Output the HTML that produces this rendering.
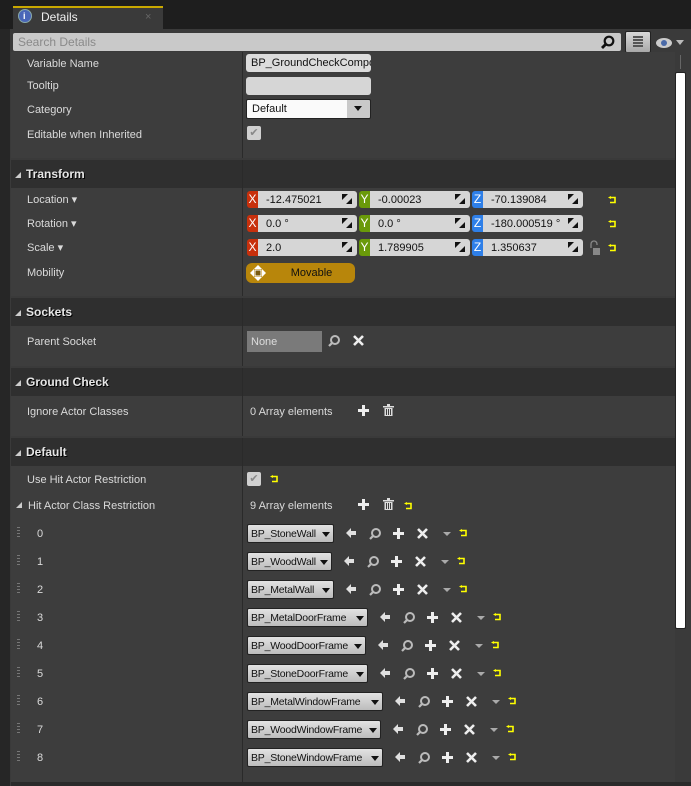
<!DOCTYPE html>
<html><head><meta charset="utf-8"><style>
*{margin:0;padding:0;box-sizing:border-box}
body{width:691px;height:786px;overflow:hidden;background:#222;font-family:"Liberation Sans",sans-serif;font-size:11px;color:#dadada;position:relative}
.a{position:absolute}
.t{position:absolute;white-space:nowrap;line-height:14px;margin-top:1px}
.hdr{position:absolute;left:11px;width:664px;height:28px;background:#2f2f2f}
.hdr span{position:absolute;left:15px;top:7px;font-weight:bold;font-size:12px;color:#e6e6e6;text-shadow:1px 1px 0 #000}
.hdr i{position:absolute;left:4px;top:12px;width:0;height:0;border-left:6px solid transparent;border-bottom:6px solid #ccc}
.rows{position:absolute;left:11px;width:664px;background:#3d3d3d}
.div{position:absolute;left:242px;width:1px;background:#2a2a2a}
.fld{position:absolute;height:17px;background:#d6d6d6;border-radius:0 3px 3px 0;color:#111;font-size:11px;line-height:18px;padding-left:8px}
.ax{position:absolute;width:11px;height:17px;color:#fff;font-size:12px;line-height:17px;text-align:center;border-radius:3px 0 0 3px}
.dd{position:absolute;height:19px;background:linear-gradient(#e2e2e2,#bcbcbc);border:1px solid #222;border-radius:2px;color:#111;font-size:10.5px;letter-spacing:-0.2px;line-height:18px;padding-left:3px;white-space:nowrap;overflow:hidden}
.dd:after{content:"";position:absolute;right:3px;top:7px;border-left:4px solid transparent;border-right:4px solid transparent;border-top:5px solid #111}
.grip{position:absolute;left:17px;width:3px;height:12px;background:repeating-linear-gradient(#777 0 1px,transparent 1px 3px)}
</style></head><body>
<svg width="0" height="0" style="position:absolute"><defs>
<g id="rs"><path d="M2 1.5h5v5H2" stroke="#ff0" stroke-width="1.6" fill="none"/><path d="M0 1.5l3-1.5v3z" fill="#ff0"/></g>
<g id="ar"><path d="M0 5l5-5v3h5v4H5v3z" fill="#e0e0e0"/></g>
<g id="mg"><circle cx="7" cy="5" r="4" stroke="#bbb" stroke-width="2" fill="none"/><path d="M4 8l-3 3" stroke="#bbb" stroke-width="2.2"/></g>
<g id="pl"><path d="M4 0h3v4h4v3H7v4H4V7H0V4h4z" fill="#eee"/></g>
<g id="xx"><path d="M1 1l9 9M10 1l-9 9" stroke="#eee" stroke-width="2.6"/></g>
<g id="tr"><path d="M0 0h8l-4 4z" fill="#aaa"/></g>
<g id="bin"><path d="M0 2h11v1.5H0zM4 0h3v2H4zM1.5 4h8v8h-8z" fill="#ddd"/><path d="M3.5 5v6M5.5 5v6M7.5 5v6" stroke="#3d3d3d"/></g>
</defs></svg>

<div class="a" style="left:0;top:0;width:691px;height:29px;background:#1e1e1e"></div>
<div class="a" style="left:13px;top:6px;width:150px;height:23px;background:#3a3a3a;border-top:2px solid #c9a800"></div>
<div class="a" style="left:18px;top:9px;width:14px;height:14px;border-radius:50%;background:#4a66b8;border:1px solid #8aa"></div>
<div class="t" style="left:23px;top:8px;color:#fff;font-size:9px;font-weight:bold">i</div>
<div class="t" style="left:41px;top:9px;color:#eee;font-size:12px">Details</div>
<div class="t" style="left:145px;top:9px;color:#666;font-size:11px">×</div>
<div class="a" style="left:0;top:29px;width:691px;height:757px;background:#3a3a3a"></div>
<div class="a" style="left:0;top:29px;width:10px;height:757px;background:#262626"></div>
<div class="a" style="left:13px;top:33px;width:608px;height:18px;background:#c9c9c9;border-radius:2px"></div>
<div class="t" style="left:18px;top:34px;color:#8a8a8a;font-size:12px">Search Details</div>
<svg class="a" style="left:600px;top:35px" width="16" height="16"><circle cx="9" cy="6" r="4.3" stroke="#111" stroke-width="2.2" fill="none"/><path d="M6 9l-4 4" stroke="#111" stroke-width="2.8"/></svg>
<div class="a" style="left:625px;top:31px;width:26px;height:22px;background:linear-gradient(#d8d8d8,#a8a8a8);border:1px solid #222;border-radius:2px"></div>
<div class="a" style="left:633px;top:36px;width:10px;height:12px;background:repeating-linear-gradient(#555 0 2px,transparent 2px 3px)"></div>
<div class="a" style="left:656px;top:38px;width:16px;height:10px;border-radius:50%;background:#ccc"></div>
<div class="a" style="left:661px;top:40px;width:6px;height:6px;border-radius:50%;background:#4a6aa8"></div>
<div class="a" style="left:676px;top:40px;border-left:4px solid transparent;border-right:4px solid transparent;border-top:5px solid #bbb"></div>
<div class="a" style="left:680px;top:55px;width:1px;height:14px;background:#666"></div>
<div class="a" style="left:675px;top:72px;width:11px;height:557px;background:#fff;border:1px solid #222;border-radius:2px"></div>

<div class="rows" style="top:52px;height:106px"></div>
<div class="div" style="top:52px;height:106px"></div>
<div class="t" style="left:27px;top:56px">Variable Name</div>
<div class="t" style="left:27px;top:78px">Tooltip</div>
<div class="t" style="left:27px;top:102px">Category</div>
<div class="t" style="left:27px;top:127px">Editable when Inherited</div>
<div class="a" style="left:246px;top:54px;width:125px;height:18px;background:#dcdcdc;border-radius:3px;color:#111;line-height:19px;padding-left:5px;overflow:hidden;white-space:nowrap">BP_GroundCheckComponent</div>
<div class="a" style="left:246px;top:77px;width:125px;height:18px;background:#d6d6d6;border-radius:3px"></div>
<div class="a" style="left:246px;top:99px;width:125px;height:20px;background:linear-gradient(90deg,#fafafa 0 100px,#c9c9c9 100px);border:1px solid #222;border-radius:2px;color:#111;line-height:19px;padding-left:5px">Default</div>
<div class="a" style="left:354px;top:106px;border-left:4px solid transparent;border-right:4px solid transparent;border-top:5px solid #111"></div>
<div class="a" style="left:247px;top:126px;width:14px;height:14px;background:#d0d0d0;border-radius:2px;color:#888;font-size:11px;line-height:14px;text-align:center">✔</div>

<div class="hdr" style="top:160px"><i></i><span>Transform</span></div>
<div class="rows" style="top:188px;height:108px"></div>
<div class="div" style="top:160px;height:136px"></div>
<div class="t" style="left:27px;top:192px">Location ▾</div>
<div class="t" style="left:27px;top:216px">Rotation ▾</div>
<div class="t" style="left:27px;top:240px">Scale ▾</div>
<div class="t" style="left:27px;top:265px">Mobility</div>

<div class="ax" style="left:247px;top:191px;background:#c8300c">X</div><div class="fld" style="left:258px;top:191px;width:99px">-12.475021</div>
<div class="ax" style="left:359px;top:191px;background:#6a9a0a">Y</div><div class="fld" style="left:370px;top:191px;width:100px">-0.00023</div>
<div class="ax" style="left:472px;top:191px;background:#2e7fe8">Z</div><div class="fld" style="left:483px;top:191px;width:100px">-70.139084</div>
<div class="ax" style="left:247px;top:215px;background:#c8300c">X</div><div class="fld" style="left:258px;top:215px;width:99px">0.0 °</div>
<div class="ax" style="left:359px;top:215px;background:#6a9a0a">Y</div><div class="fld" style="left:370px;top:215px;width:100px">0.0 °</div>
<div class="ax" style="left:472px;top:215px;background:#2e7fe8">Z</div><div class="fld" style="left:483px;top:215px;width:100px">-180.000519 °</div>
<div class="ax" style="left:247px;top:239px;background:#c8300c">X</div><div class="fld" style="left:258px;top:239px;width:99px">2.0</div>
<div class="ax" style="left:359px;top:239px;background:#6a9a0a">Y</div><div class="fld" style="left:370px;top:239px;width:100px">1.789905</div>
<div class="ax" style="left:472px;top:239px;background:#2e7fe8">Z</div><div class="fld" style="left:483px;top:239px;width:100px">1.350637</div>
<svg class="a" style="left:342px;top:194px" width="10" height="10"><path d="M0 0h6L0 6zM10 10H4l6-6z" fill="#111"/></svg>
<svg class="a" style="left:455px;top:194px" width="10" height="10"><path d="M0 0h6L0 6zM10 10H4l6-6z" fill="#111"/></svg>
<svg class="a" style="left:568px;top:194px" width="10" height="10"><path d="M0 0h6L0 6zM10 10H4l6-6z" fill="#111"/></svg>
<svg class="a" style="left:342px;top:218px" width="10" height="10"><path d="M0 0h6L0 6zM10 10H4l6-6z" fill="#111"/></svg>
<svg class="a" style="left:455px;top:218px" width="10" height="10"><path d="M0 0h6L0 6zM10 10H4l6-6z" fill="#111"/></svg>
<svg class="a" style="left:568px;top:218px" width="10" height="10"><path d="M0 0h6L0 6zM10 10H4l6-6z" fill="#111"/></svg>
<svg class="a" style="left:342px;top:242px" width="10" height="10"><path d="M0 0h6L0 6zM10 10H4l6-6z" fill="#111"/></svg>
<svg class="a" style="left:455px;top:242px" width="10" height="10"><path d="M0 0h6L0 6zM10 10H4l6-6z" fill="#111"/></svg>
<svg class="a" style="left:568px;top:242px" width="10" height="10"><path d="M0 0h6L0 6zM10 10H4l6-6z" fill="#111"/></svg>
<svg class="a" style="left:608px;top:196px" width="8" height="8"><use href="#rs"/></svg>
<svg class="a" style="left:608px;top:220px" width="8" height="8"><use href="#rs"/></svg>
<svg class="a" style="left:608px;top:244px" width="8" height="8"><use href="#rs"/></svg>
<svg class="a" style="left:589px;top:240px" width="12" height="16"><path d="M2 8V4a3 3 0 0 1 6 0v1" stroke="#888" stroke-width="1.3" fill="none"/><rect x="4" y="8" width="7" height="7" fill="#888"/></svg>
<div class="a" style="left:246px;top:263px;width:109px;height:20px;background:#b8860b;border-radius:6px;color:#111;text-align:center;line-height:21px;padding-left:22px">Movable</div>
<svg class="a" style="left:250px;top:265px" width="16" height="16"><path d="M8 0l4 4H4zM8 16l4-4H4zM0 8l4-4v8zM16 8l-4-4v8z" fill="#fff"/><rect x="5" y="5" width="6" height="6" fill="#7a5a10" stroke="#fff"/></svg>

<div class="hdr" style="top:298px"><i></i><span>Sockets</span></div>
<div class="rows" style="top:326px;height:40px"></div>
<div class="div" style="top:298px;height:68px"></div>
<div class="t" style="left:27px;top:334px">Parent Socket</div>
<div class="a" style="left:247px;top:331px;width:75px;height:21px;background:#7a7a7a;color:#ddd;line-height:22px;padding-left:4px">None</div>
<svg class="a" style="left:328px;top:335px" width="14" height="14"><use href="#mg"/></svg>
<svg class="a" style="left:353px;top:335px" width="11" height="11"><use href="#xx"/></svg>

<div class="hdr" style="top:368px"><i></i><span>Ground Check</span></div>
<div class="rows" style="top:396px;height:40px"></div>
<div class="div" style="top:368px;height:68px"></div>
<div class="t" style="left:27px;top:404px">Ignore Actor Classes</div>
<div class="t" style="left:250px;top:404px">0 Array elements</div>
<svg class="a" style="left:358px;top:405px" width="11" height="11"><use href="#pl"/></svg>
<svg class="a" style="left:383px;top:404px" width="11" height="13"><use href="#bin"/></svg>

<div class="hdr" style="top:438px"><i></i><span>Default</span></div>
<div class="rows" style="top:466px;height:316px"></div>
<div class="div" style="top:438px;height:344px"></div>
<div class="t" style="left:27px;top:472px">Use Hit Actor Restriction</div>
<div class="a" style="left:247px;top:472px;width:14px;height:14px;background:#d0d0d0;border-radius:2px;color:#888;line-height:14px;text-align:center">✔</div>
<svg class="a" style="left:270px;top:475px" width="8" height="8"><use href="#rs"/></svg>
<div class="a" style="left:16px;top:502px;border-left:6px solid transparent;border-bottom:6px solid #ccc"></div>
<div class="t" style="left:28px;top:498px">Hit Actor Class Restriction</div>
<div class="t" style="left:250px;top:498px">9 Array elements</div>
<svg class="a" style="left:358px;top:499px" width="11" height="11"><use href="#pl"/></svg>
<svg class="a" style="left:383px;top:498px" width="11" height="13"><use href="#bin"/></svg>
<svg class="a" style="left:404px;top:502px" width="8" height="8"><use href="#rs"/></svg>

<div class="grip" style="top:527px"></div><div class="t" style="left:37px;top:526px">0</div><div class="dd" style="left:247px;top:524px;width:87px">BP_StoneWall</div>
<div class="grip" style="top:555px"></div><div class="t" style="left:37px;top:554px">1</div><div class="dd" style="left:247px;top:552px;width:85px">BP_WoodWall</div>
<div class="grip" style="top:583px"></div><div class="t" style="left:37px;top:582px">2</div><div class="dd" style="left:247px;top:580px;width:87px">BP_MetalWall</div>
<div class="grip" style="top:611px"></div><div class="t" style="left:37px;top:610px">3</div><div class="dd" style="left:247px;top:608px;width:121px">BP_MetalDoorFrame</div>
<div class="grip" style="top:639px"></div><div class="t" style="left:37px;top:638px">4</div><div class="dd" style="left:247px;top:636px;width:119px">BP_WoodDoorFrame</div>
<div class="grip" style="top:667px"></div><div class="t" style="left:37px;top:666px">5</div><div class="dd" style="left:247px;top:664px;width:121px">BP_StoneDoorFrame</div>
<div class="grip" style="top:695px"></div><div class="t" style="left:37px;top:694px">6</div><div class="dd" style="left:247px;top:692px;width:136px">BP_MetalWindowFrame</div>
<div class="grip" style="top:723px"></div><div class="t" style="left:37px;top:722px">7</div><div class="dd" style="left:247px;top:720px;width:134px">BP_WoodWindowFrame</div>
<div class="grip" style="top:751px"></div><div class="t" style="left:37px;top:750px">8</div><div class="dd" style="left:247px;top:748px;width:136px">BP_StoneWindowFrame</div>

<svg class="a" style="left:0;top:0" width="691" height="786">
<g transform="translate(346,528)"><use href="#ar"/><use href="#mg" x="23"/><use href="#pl" x="47"/><use href="#xx" x="71"/><use href="#tr" x="97" y="4"/><use href="#rs" x="113" y="1"/></g>
<g transform="translate(344,556)"><use href="#ar"/><use href="#mg" x="23"/><use href="#pl" x="47"/><use href="#xx" x="71"/><use href="#tr" x="97" y="4"/><use href="#rs" x="113" y="1"/></g>
<g transform="translate(346,584)"><use href="#ar"/><use href="#mg" x="23"/><use href="#pl" x="47"/><use href="#xx" x="71"/><use href="#tr" x="97" y="4"/><use href="#rs" x="113" y="1"/></g>
<g transform="translate(380,612)"><use href="#ar"/><use href="#mg" x="23"/><use href="#pl" x="47"/><use href="#xx" x="71"/><use href="#tr" x="97" y="4"/><use href="#rs" x="113" y="1"/></g>
<g transform="translate(378,640)"><use href="#ar"/><use href="#mg" x="23"/><use href="#pl" x="47"/><use href="#xx" x="71"/><use href="#tr" x="97" y="4"/><use href="#rs" x="113" y="1"/></g>
<g transform="translate(380,668)"><use href="#ar"/><use href="#mg" x="23"/><use href="#pl" x="47"/><use href="#xx" x="71"/><use href="#tr" x="97" y="4"/><use href="#rs" x="113" y="1"/></g>
<g transform="translate(395,696)"><use href="#ar"/><use href="#mg" x="23"/><use href="#pl" x="47"/><use href="#xx" x="71"/><use href="#tr" x="97" y="4"/><use href="#rs" x="113" y="1"/></g>
<g transform="translate(393,724)"><use href="#ar"/><use href="#mg" x="23"/><use href="#pl" x="47"/><use href="#xx" x="71"/><use href="#tr" x="97" y="4"/><use href="#rs" x="113" y="1"/></g>
<g transform="translate(395,752)"><use href="#ar"/><use href="#mg" x="23"/><use href="#pl" x="47"/><use href="#xx" x="71"/><use href="#tr" x="97" y="4"/><use href="#rs" x="113" y="1"/></g>
</svg>
<div class="a" style="left:11px;top:782px;width:680px;height:4px;background:#2a2a2a"></div>
</body></html>
